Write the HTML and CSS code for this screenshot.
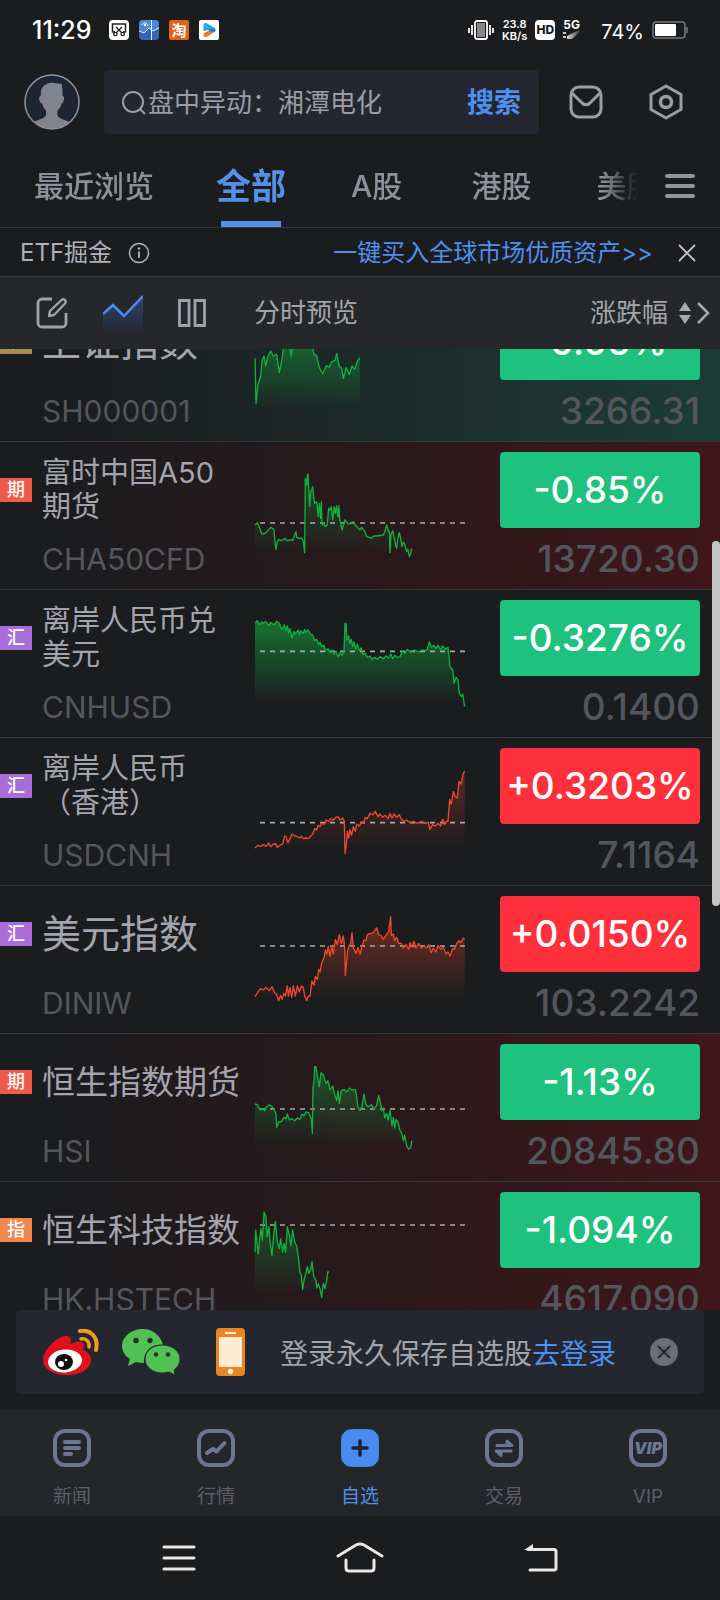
FILE: index.html
```html
<!DOCTYPE html>
<html lang="zh-CN">
<head>
<meta charset="utf-8">
<meta name="viewport" content="width=device-width, initial-scale=1">
<title>自选</title>
<link rel="stylesheet" href="styles.css">
</head>
<body>
<div class="app">
  <div class="status">
    <span class="status-time">11:29</span>
    <div class="status-apps">
      <svg class="app-icon" viewBox="0 0 20 20"><rect width="20" height="20" rx="4" fill="#fff"/><path d="M6 12H3.500V4h13v8H14" fill="none" stroke="#222" stroke-width="1.500"/><path d="M7 7l6 6M13 7l-6 6" stroke="#222" stroke-width="1.300"/><circle cx="6.300" cy="14" r="1.700" fill="none" stroke="#222" stroke-width="1.300"/><circle cx="13.700" cy="14" r="1.700" fill="none" stroke="#222" stroke-width="1.300"/></svg>
      <svg class="app-icon" viewBox="0 0 20 20"><rect width="20" height="20" rx="4" fill="#3465b5"/><path d="M0 4a4 4 0 0 1 4-4h12a4 4 0 0 1 4 4v4l-6 3-4-3-5 5-5-3z" fill="#4c86d8"/><path d="M0 11l5 2 5-5 4 3 6-3M12.500 0v20M3 5c1-3 5-3 6 1" fill="none" stroke="#e8f0fc" stroke-width="1"/><circle cx="6" cy="5" r="1.200" fill="#fff"/></svg>
      <svg class="app-icon" viewBox="0 0 20 20"><rect width="20" height="20" rx="2" fill="#e0601c"/><text class="tao" x="10" y="15.500" text-anchor="middle">淘</text></svg>
      <svg class="app-icon" viewBox="0 0 20 20"><rect width="20" height="20" rx="2" fill="#fff"/><path d="M4.500 5c0-2 2-2.600 3.600-1.600L15 7.500c2 1.300 2.200 3.200.5 4.500L4.500 5z" fill="#18a8f0"/><path d="M4.500 5L11 9.500 4.500 11z" fill="#18a8f0"/><path d="M15.500 12L8.500 16.500c-2 1.200-4 .5-4-1.500 0-1 .5-2 1.500-2.500l5.500-2.500z" fill="#f07c20"/><path d="M9 8.500l7.500 1.200-1 2.300-5-.5z" fill="#2072d8"/></svg>
    </div>
    <div class="status-right">
      <svg class="vibrate" viewBox="0 0 26 20"><rect x="7" y="1" width="12" height="18" rx="2" fill="none" stroke="#fff" stroke-width="1.800"/><rect x="9" y="3" width="8" height="14" fill="#85878a"/><path d="M4 5v10M1 8v5M22 5v10M25 8v5" stroke="#fff" stroke-width="1.800"/></svg>
      <span class="speed"><span>23.8</span><span>KB/s</span></span>
      <span class="hd">HD</span>
      <span class="net">5G<svg class="signal" viewBox="0 0 18 10"><defs><linearGradient id="sig" x1="0" x2="1"><stop offset="0" stop-color="#ddd"/><stop offset="1" stop-color="#333"/></linearGradient></defs><path d="M0 3h3M0 7h3" stroke="#ccc" stroke-width="2"/><path d="M4 9V6L16 0l1 2L9 9z" fill="url(#sig)"/></svg></span>
      <span class="percent">74%</span>
      <svg class="battery" viewBox="0 0 36 18"><rect x="1" y="1" width="32" height="16" rx="3" fill="none" stroke="#77797c" stroke-width="1.500"/><rect x="3" y="3" width="21" height="12" rx="1" fill="#fff"/><path d="M35 6v6" stroke="#77797c" stroke-width="1.500"/></svg>
    </div>
  </div>

  <header class="top">
    <button class="icon-btn" aria-label="我的">
      <svg class="avatar" viewBox="0 0 56 56"><defs><clipPath id="face"><circle cx="28" cy="28" r="27"/></clipPath></defs><circle cx="28" cy="28" r="27" fill="#1e2532"/><path clip-path="url(#face)" fill="#81838f" d="M17 17c1-6 8-9 13-8 3 .5 6 .5 8 1-.5 2 .5 4 .5 7v5c2 0 2 3 1 5-.5 1.500-1 2.500-2 2.500-.5 3-2 5-4 7v5c2 4 11 5 17 9v8H4v-8c6-4 16-5 18-9v-5c-2-2-3-4-4-7-1 0-2-1-2.300-2.500-1-2-1-4.500 1-5z"/><circle cx="28" cy="28" r="27" fill="none" stroke="#90929b" stroke-width="1.500"/></svg>
    </button>
    <form class="search">
      <svg class="lens" viewBox="0 0 26 26"><circle cx="12" cy="12" r="10" fill="none" stroke="#9a9ca6" stroke-width="2"/><path d="M19 19l5 5" stroke="#9a9ca6" stroke-width="2"/></svg>
      <input class="search-input" type="text" aria-label="搜索股票" placeholder="盘中异动：湘潭电化">
      <button class="search-btn" type="button">搜索</button>
    </form>
    <button class="icon-btn" aria-label="消息"><svg class="icon-34" viewBox="0 0 34 34"><rect x="2" y="2" width="30" height="30" rx="8" fill="none" stroke="#9b9ca4" stroke-width="3"/><path d="M3 8l10 10q4 3.500 8 0L31 8" fill="none" stroke="#9b9ca4" stroke-width="3"/></svg></button>
    <button class="icon-btn" aria-label="设置"><svg class="icon-34" viewBox="0 0 34 36"><path d="M17 2l15 8.500v15L17 34 2 25.500v-15z" fill="none" stroke="#9b9ca4" stroke-width="3" stroke-linejoin="round"/><circle cx="17" cy="18" r="5.500" fill="none" stroke="#9b9ca4" stroke-width="3.500"/></svg></button>
  </header>

  <nav class="tabs">
    <div class="tab-list">
      <a class="tab" href="#recent">最近浏览</a>
      <a class="tab tab-on" href="#all">全部</a>
      <a class="tab" href="#a">A股</a>
      <a class="tab" href="#hk">港股</a>
      <a class="tab" href="#us">美股</a>
    </div>
    <button class="icon-btn" aria-label="全部分组"><svg class="burger" viewBox="0 0 30 24"><path d="M2 2h26M2 12h26M2 22h26" stroke="#93949c" stroke-width="4" stroke-linecap="round"/></svg></button>
  </nav>

  <div class="promo">
    <span>ETF掘金</span>
    <svg class="info" viewBox="0 0 22 22"><circle cx="11" cy="11" r="9.500" fill="none" stroke="#b4b5ba" stroke-width="1.500"/><path d="M11 9.500V16" stroke="#b4b5ba" stroke-width="1.800"/><circle cx="11" cy="6.500" r="1.200" fill="#b4b5ba"/></svg>
    <a class="promo-link" href="#etf">一键买入全球市场优质资产&gt;&gt;</a>
    <button class="icon-btn" aria-label="关闭"><svg class="close" viewBox="0 0 18 18"><path d="M1 1l16 16M17 1L1 17" stroke="#c2c2c4" stroke-width="1.800"/></svg></button>
  </div>

  <div class="tools">
    <div class="tool-icons">
      <button class="icon-btn" aria-label="编辑"><svg class="icon-32" viewBox="0 0 32 32"><path d="M16 2H6a4 4 0 0 0-4 4v20a4 4 0 0 0 4 4h20a4 4 0 0 0 4-4V16" fill="none" stroke="#a0a1a9" stroke-width="2.800"/><path d="M13 19l1-5L25.500 3q2-1.500 3.500 0t0 3.500L18 18z" fill="none" stroke="#a0a1a9" stroke-width="2.400" stroke-linejoin="round"/></svg></button>
      <button class="icon-btn" aria-label="分时"><svg class="trend" viewBox="0 0 40 38"><defs><linearGradient id="tg" x1="0" y1="0" x2="0" y2="1"><stop offset="0" stop-color="#3568b4" stop-opacity=".6"/><stop offset="1" stop-color="#20355c" stop-opacity=".2"/></linearGradient></defs><path d="M0 20L10 11l11 11L40 1v37H0z" fill="url(#tg)"/><path d="M0 20L10 11l11 11L40 2" fill="none" stroke="#4a8df0" stroke-width="2.500"/></svg></button>
      <button class="icon-btn" aria-label="双列"><svg class="cols" viewBox="0 0 28 28"><path d="M1.500 1.500h9.500v25H1.500zM17 1.500h9.500v25H17z" fill="none" stroke="#a0a1a9" stroke-width="2.800"/></svg></button>
    </div>
    <span class="tool-title">分时预览</span>
    <button class="sort">涨跌幅<svg class="sort-icon" viewBox="0 0 32 24"><path d="M7 1l6 9H1zM7 23l6-9H1z" fill="#a8a9af"/><path d="M20 2l10 10-10 10" fill="none" stroke="#a8a9af" stroke-width="2.500"/></svg></button>
  </div>

  <main class="quotes">
    <ul class="rows">
      <li class="row row-green">
        <span class="tag tag-gold">沪</span><span class="name name-l">上证指数</span>
        <svg class="chart" data-chart="sh" viewBox="762 0 636 444"></svg>
        <span class="pill down">-0.06%</span><span class="code">SH000001</span><span class="price">3266.31</span>
      </li>
      <li class="row row-red">
        <span class="tag tag-red">期</span><span class="name name-s">富时中国A50期货</span>
        <svg class="chart" data-chart="a50" viewBox="762 0 636 444"></svg>
        <span class="pill down">-0.85%</span><span class="code">CHA50CFD</span><span class="price">13720.30</span>
      </li>
      <li class="row">
        <span class="tag tag-purple">汇</span><span class="name name-s">离岸人民币兑美元</span>
        <svg class="chart" data-chart="cnhusd" viewBox="762 0 636 444"></svg>
        <span class="pill down">-0.3276%</span><span class="code">CNHUSD</span><span class="price">0.1400</span>
      </li>
      <li class="row">
        <span class="tag tag-purple">汇</span><span class="name name-s">离岸人民币（香港）</span>
        <svg class="chart" data-chart="usdcnh" viewBox="762 0 636 444"></svg>
        <span class="pill up">+0.3203%</span><span class="code">USDCNH</span><span class="price">7.1164</span>
      </li>
      <li class="row">
        <span class="tag tag-purple">汇</span><span class="name name-l">美元指数</span>
        <svg class="chart" data-chart="diniw" viewBox="762 0 636 444"></svg>
        <span class="pill up">+0.0150%</span><span class="code">DINIW</span><span class="price">103.2242</span>
      </li>
      <li class="row row-red">
        <span class="tag tag-red">期</span><span class="name name-m">恒生指数期货</span>
        <svg class="chart" data-chart="hsi" viewBox="762 0 636 444"></svg>
        <span class="pill down">-1.13%</span><span class="code">HSI</span><span class="price">20845.80</span>
      </li>
      <li class="row row-red">
        <span class="tag tag-orange">指</span><span class="name name-m">恒生科技指数</span>
        <svg class="chart" data-chart="hstech" viewBox="762 0 636 444"></svg>
        <span class="pill down">-1.094%</span><span class="code">HK.HSTECH</span><span class="price">4617.090</span>
      </li>
    </ul>
    <div class="scrollbar"></div>
  </main>

  <section class="login">
    <div class="login-icons">
      <svg class="weibo" viewBox="0 0 56 46"><path d="M0 31C0 22 12 9 22 7q8-1 5 8 12-5 14 0 1 3-1 6 8 3 8 10c0 9-11 15-24 15S0 40 0 31z" fill="#e2101a"/><ellipse cx="22" cy="32" rx="17" ry="11.500" fill="#fff" transform="rotate(-6 22 32)"/><ellipse cx="21" cy="33" rx="9" ry="8" fill="#111"/><circle cx="18" cy="35" r="3" fill="#fff"/><circle cx="23" cy="31" r="1.300" fill="#fff"/><path d="M37 2c10-2 19 6 16 19" fill="none" stroke="#f29b1c" stroke-width="4" stroke-linecap="round"/><path d="M38 10c5-1 9 3 8 8" fill="none" stroke="#f29b1c" stroke-width="3.500" stroke-linecap="round"/></svg>
      <svg class="wechat" viewBox="0 0 58 46"><path d="M21 0C9 0 0 8 0 17c0 5 3 10 8 13l-2 7 8-4q4 1 8 1a16 16 0 0 1 19-18C39 7 31 0 21 0z" fill="#50c152"/><path d="M40 16c-9 0-17 6-17 14s8 14 17 14q4 0 7-1l6 3-1-5c4-3 6-7 6-11 0-8-8-14-18-14z" fill="#50c152" stroke="#25302e" stroke-width="1"/><g fill="#25302e"><circle cx="14" cy="11.500" r="2.700"/><circle cx="28" cy="11.500" r="2.700"/><circle cx="34" cy="25.500" r="2.200"/><circle cx="46" cy="25.500" r="2.200"/></g></svg>
      <svg class="phone" viewBox="0 0 29 48"><rect width="29" height="48" rx="4" fill="#ea8526"/><rect x="3" y="9" width="23" height="30" fill="#fdebd2"/><path d="M9 5h11" stroke="#fdebd2" stroke-width="2"/><circle cx="14.500" cy="43.500" r="2.700" fill="#fdebd2"/></svg>
    </div>
    <p class="login-text">登录永久保存自选股<a class="login-link" href="#login">去登录</a></p>
    <button class="icon-btn" aria-label="关闭提示"><svg class="dismiss" viewBox="0 0 28 28"><circle cx="14" cy="14" r="14" fill="#6b6d78"/><path d="M8 8l12 12M20 8L8 20" stroke="#24272f" stroke-width="1.800"/></svg></button>
  </section>

  <nav class="bottom">
    <a class="item" href="#news"><svg class="item-icon" viewBox="0 0 38 38"><rect x="2" y="2" width="34" height="34" rx="10" fill="none" stroke="#6a7894" stroke-width="4"/><path d="M12 13h14M12 19h14M12 25h6" stroke="#6a7894" stroke-width="4" stroke-linecap="round"/></svg>新闻</a>
    <a class="item" href="#market"><svg class="item-icon" viewBox="0 0 38 38"><rect x="2" y="2" width="34" height="34" rx="10" fill="none" stroke="#6a7894" stroke-width="4"/><path d="M10 24l6-4 3.500 2.500L27.500 14" fill="none" stroke="#6a7894" stroke-width="4" stroke-linecap="round" stroke-linejoin="round"/></svg>行情</a>
    <a class="item item-on" href="#watch"><svg class="item-icon" viewBox="0 0 38 38"><rect width="38" height="38" rx="11" fill="#4a8af0"/><path d="M12 19h14M19 12v14" stroke="#1e2430" stroke-width="3.500" stroke-linecap="round"/></svg>自选</a>
    <a class="item" href="#trade"><svg class="item-icon" viewBox="0 0 38 38"><rect x="2" y="2" width="34" height="34" rx="10" fill="none" stroke="#6a7894" stroke-width="4"/><path d="M12 16.500h15l-5-4.500v4M26 22H11l5 4.500v-4" fill="#6a7894" stroke="#6a7894" stroke-width="3" stroke-linecap="round" stroke-linejoin="round"/></svg>交易</a>
    <a class="item" href="#vip"><svg class="item-icon" viewBox="0 0 38 38"><rect x="2" y="2" width="34" height="34" rx="10" fill="none" stroke="#6a7894" stroke-width="4"/><text class="vip" x="19" y="25" text-anchor="middle">VIP</text></svg>VIP</a>
  </nav>

  <div class="system">
    <button class="icon-btn sys-key" aria-label="最近任务"><svg class="sys-menu" viewBox="0 0 34 28"><path d="M2 3h30M2 14h30M2 25h30" stroke="#e8e8e8" stroke-width="3" stroke-linecap="round"/></svg></button>
    <button class="icon-btn sys-key" aria-label="主屏幕"><svg class="sys-home" viewBox="0 0 48 32"><path d="M2 14L20 3q4-2 8 0l18 11M10 18v8q0 3 3 3h22q3 0 3-3v-8" fill="none" stroke="#e8e8e8" stroke-width="3" stroke-linecap="round"/></svg></button>
    <button class="icon-btn sys-key" aria-label="返回"><svg class="sys-back" viewBox="0 0 34 28"><path d="M4 5.500h26q2 0 2 2V24q0 2-2 2H6" fill="none" stroke="#e8e8e8" stroke-width="3" stroke-linecap="round"/><path d="M0 6l9-6v6z" fill="#e8e8e8"/></svg></button>
  </div>
</div>
<script src="charts.js"></script>
</body>
</html>
```
FILE: styles.css
```css
* { box-sizing: border-box; }

body {
  margin: 0;
  background: #1b1c1e;
  color: #a3a4ab;
  font-family: Inter, "Noto Sans CJK SC", sans-serif;
}

.app { height: 100vh; display: flex; flex-direction: column; overflow: hidden; }
.app > * { flex: none; }
.app svg { display: block; flex: none; }
a { color: inherit; text-decoration: none; }
button { font: inherit; color: inherit; background: none; border: 0; padding: 0; }
.icon-btn { display: flex; flex: none; }

/* status bar */
.status { display: flex; align-items: center; height: 60px; padding: 0 32px; color: #fff; }
.status-time { font-size: 25px; font-weight: 500; line-height: 32px; }
.status-apps { display: flex; gap: 10px; margin-left: 17px; }
.app-icon { width: 20px; height: 20px; }
.tao { font-size: 15px; font-weight: 700; fill: #fff; }
.status-right { display: flex; align-items: center; gap: 8px; margin-left: auto; }
.vibrate { width: 26px; height: 20px; }
.speed { display: flex; flex-direction: column; align-items: center; font-size: 11px; font-weight: 600; line-height: 12px; }
.hd { width: 20px; height: 20px; border-radius: 4px; background: #fff; color: #1b1c1e; font-size: 12px; font-weight: 800; line-height: 20px; text-align: center; }
.net { display: flex; flex-direction: column; margin-right: 12px; font-size: 12px; font-weight: 700; line-height: 10px; }
.signal { width: 18px; height: 10px; }
.percent { padding-top: 3px; font-size: 20px; line-height: 30px; }
.battery { width: 36px; height: 18px; }

/* search */
.top { display: flex; align-items: center; height: 84px; padding: 0 37px 0 24px; }
.avatar { width: 56px; height: 56px; }
.search { flex: 1; min-width: 0; display: flex; align-items: center; height: 64px; margin: 0 30px 0 24px; padding: 2px 18px 0 17px; border-radius: 4px; background: #242730; }
.lens { width: 26px; height: 26px; }
.search-input { flex: 1; min-width: 0; padding: 0 0 0 1px; border: 0; outline: 0; background: none; color: #9a9ca6; font: 26px/36px Inter, "Noto Sans CJK SC", sans-serif; }
.search-input::placeholder { color: #9a9ca6; opacity: 1; }
.search-btn { color: #4f8fee; font-size: 27px; font-weight: 700; line-height: 36px; }
.icon-34 { width: 34px; height: 36px; }
.top .icon-btn + .icon-btn { margin-left: 46px; }

/* group tabs */
.tabs { display: flex; align-items: center; height: 84px; padding-right: 25px; border-bottom: 1px solid #37383b; }
.tab-list { flex: 1; min-width: 0; display: flex; align-self: stretch; padding-left: 4px; margin-right: 27px; overflow: hidden; -webkit-mask-image: linear-gradient(to right, #000 calc(100% - 36px), transparent); mask-image: linear-gradient(to right, #000 calc(100% - 36px), transparent); }
.tab { flex: none; display: flex; align-items: center; justify-content: center; min-width: 125px; padding: 0 32px 4px; color: #8f9099; font-size: 30px; font-weight: 500; }
.tab:first-child { padding: 0 34px 4px 30px; }
.tab-on { position: relative; padding: 0 28px 4px; color: #568fe8; font-size: 35px; font-weight: 700; }
.tab-on::after { content: ""; position: absolute; left: calc(50% - 30px); bottom: 0; width: 60px; height: 6px; background: #568fe8; }
.burger { width: 30px; height: 24px; }

/* promo line */
.promo { display: flex; align-items: center; height: 49px; padding: 2px 24px 0 20px; border-bottom: 1px solid #37383b; color: #b0b1b6; font-size: 24px; line-height: 36px; }
.info { width: 22px; height: 22px; margin-left: 16px; }
.promo-link { margin: 0 25px 0 auto; color: #4f8fee; }
.close { width: 18px; height: 18px; }

/* toolbar */
.tools { display: flex; align-items: center; height: 72px; padding: 0 10px 0 36px; background: #25272a; font-size: 26px; line-height: 36px; }
.tool-icons { display: flex; align-items: center; gap: 35px; width: 218px; }
.icon-32 { width: 32px; height: 32px; }
.trend { width: 40px; height: 38px; }
.cols { width: 28px; height: 28px; }
.sort { display: flex; align-items: center; gap: 10px; margin-left: auto; }
.sort-icon { width: 32px; height: 24px; }

/* quote list, shown scrolled part of the way down */
.quotes { position: relative; overflow: hidden; }
.app > .quotes { flex: 1 1 0; min-height: 0; }
.rows { margin: -55px 0 0; padding: 0; list-style: none; }
.row {
  display: grid;
  grid-template-columns: 32px minmax(0, 1fr) 246px 200px;
  grid-template-rows: 76px 61px;
  grid-template-areas: "tag name chart pill" ". code chart price";
  align-items: center;
  padding: 10px 20px 0 0;
  border-bottom: 1px solid #343639;
}
.row-red { background: linear-gradient(to right, #1b1c1e 8%, #27191c 45%, #3f161b); }
.row-green { background: linear-gradient(to right, #1b1c1e 8%, #1c2827 45%, #1c3d34); }
.tag { grid-area: tag; height: 24px; padding-left: 7px; color: #fff; font-size: 18px; font-weight: 500; line-height: 24px; }
.tag-red { background: #ef5a4b; }
.tag-purple { background: #a96dda; }
.tag-orange { background: #f0874c; }
.tag-gold { background: #a88d48; }
.name { grid-area: name; padding-left: 10px; color: #a3a4ad; white-space: nowrap; }
.name-l { font-size: 39px; line-height: 48px; }
.name-m { font-size: 33px; line-height: 42px; }
.name-s { max-width: 205px; font-size: 29px; line-height: 34px; white-space: normal; }
.code { grid-area: code; padding-left: 10px; color: #54565d; font-size: 30px; line-height: 36px; }
.chart { grid-area: chart; align-self: start; width: 212px; height: 148px; margin: -10px 0 -1px; }
.line { fill: none; stroke-width: 4; stroke-linejoin: round; }
.base { stroke: #a9a9ab; stroke-width: 5; stroke-dasharray: 15 15; }
.pill { grid-area: pill; align-self: stretch; border-radius: 4px; color: #fff; font-size: 37px; font-weight: 500; line-height: 76px; text-align: center; }
.down { background: #1ec17d; }
.up { background: #fd303b; }
.price { grid-area: price; color: #54565d; font-size: 37px; font-weight: 500; line-height: 44px; text-align: right; }
.scrollbar { position: absolute; right: 0; top: 20%; width: 8px; height: 38%; border-radius: 4px; background: #c4c4c4; }

/* login strip */
.login { display: flex; align-items: center; height: 84px; margin: 0 16px 16px; padding: 0 26px 0 27px; border-radius: 4px; background: #242730; }
.login-icons { display: flex; align-items: center; }
.weibo { width: 56px; height: 46px; }
.wechat { width: 58px; height: 46px; margin: 0 36px 0 23px; }
.phone { width: 29px; height: 48px; }
.login-text { flex: 1; margin: 0 0 0 35px; padding-top: 3px; font-size: 28px; line-height: 40px; white-space: nowrap; }
.login-link { color: #4f8fee; }
.dismiss { width: 28px; height: 28px; }

/* bottom navigation */
.bottom { display: flex; height: 106px; background: #25262a; }
.item { flex: 1; display: flex; flex-direction: column; align-items: center; gap: 16px; padding-top: 19px; color: #5c5e66; font-size: 19px; line-height: 28px; }
.item-on { color: #4f8fee; }
.item-icon { width: 38px; height: 38px; }
.vip { font-size: 16px; font-weight: 900; font-style: italic; fill: #6a7894; }

/* system keys */
.system { display: flex; align-items: center; height: 84px; padding: 0 88px; }
.sys-key { flex: 1; justify-content: center; }
.sys-menu { width: 34px; height: 28px; }
.sys-home { width: 48px; height: 32px; }
.sys-back { width: 34px; height: 28px; }
```
FILE: charts.js
```js
const GREEN = "#12b03e";
const RED = "#f0482c";
const FLOOR = 340;

const charts = {
  sh: { color: GREEN, fill: 0.6, pts: "765,193 768,328 774,271 782,246 786,201 792,186 797,216 803,189 812,171 820,186 830,181 838,236 846,196 850,160 870,150 873,186 880,150 935,150 942,179 950,186 958,221 968,239 978,216 988,219 995,203 1005,199 1010,179 1018,216 1025,223 1030,254 1038,221 1048,241 1056,216 1064,226 1072,201 1080,191" },
  a50: { color: GREEN, fill: 0.35, base: 243, pts: "765,249 772,242 780,260 785,276 795,274 800,269 812,256 822,262 824,294 828,322 832,300 836,292 842,296 848,294 855,289 862,297 870,293 878,296 884,278 888,269 890,286 900,290 905,288 910,298 914,332 916,109 920,129 922,100 924,96 929,194 932,150 934,144 938,134 941,165 944,184 950,179 953,205 955,224 958,184 960,200 962,229 964,180 966,249 970,243 975,254 982,249 986,199 990,205 994,194 998,234 1003,194 1006,215 1010,191 1014,224 1017,191 1019,229 1026,264 1034,234 1040,240 1045,246 1060,239 1066,250 1072,256 1080,264 1085,256 1095,269 1100,284 1108,286 1115,289 1122,282 1130,282 1150,279 1156,265 1160,249 1166,269 1168,269 1170,332 1173,280 1178,266 1184,294 1187,310 1190,319 1194,285 1198,272 1202,290 1206,314 1210,300 1214,306 1220,329 1224,322 1228,344 1232,335 1235,319" },
  cnhusd: { color: GREEN, fill: 0.6, base: 184, pts: "765,98 772,92 778,104 786,96 790,100 798,94 806,106 812,98 822,104 830,94 838,100 844,118 850,112 853,104 858,122 862,108 866,128 870,116 876,144 882,124 886,132 894,120 898,134 902,122 910,130 914,118 918,128 924,120 932,132 938,136 944,152 950,148 956,164 960,156 966,170 972,166 976,182 984,176 990,188 996,180 1002,192 1008,184 1014,200 1020,188 1026,196 1032,184 1035,100 1038,100 1041,150 1046,138 1049,160 1054,148 1058,170 1062,156 1067,178 1072,162 1078,182 1084,174 1088,194 1096,190 1102,202 1110,198 1116,208 1124,202 1132,208 1140,200 1150,206 1158,198 1166,204 1172,192 1178,206 1184,196 1192,202 1200,200 1208,182 1214,190 1222,178 1232,186 1244,180 1256,186 1266,180 1274,182 1282,178 1288,156 1294,172 1302,166 1308,176 1314,166 1322,180 1328,168 1336,178 1344,172 1346,190 1350,230 1358,240 1362,280 1368,262 1374,270 1378,310 1384,320 1388,312 1394,350" },
  usdcnh: { color: RED, fill: 0.3, base: 254, pts: "765,330 774,322 782,325 790,320 798,325 806,315 812,326 818,320 826,316 832,328 840,322 848,318 854,294 858,296 864,314 870,302 876,288 884,294 892,296 900,300 904,294 910,302 918,300 926,302 932,294 938,288 944,272 950,276 954,262 960,266 966,256 974,258 978,246 986,250 992,242 1000,246 1008,238 1014,236 1020,246 1028,240 1033,250 1035,346 1039,320 1042,280 1046,300 1050,275 1055,292 1060,266 1066,280 1070,258 1078,264 1084,252 1090,256 1096,238 1102,242 1110,226 1118,230 1126,220 1134,236 1140,228 1148,238 1156,232 1164,242 1170,226 1176,240 1182,228 1190,238 1198,230 1204,244 1212,250 1220,246 1230,254 1240,250 1252,256 1264,250 1276,256 1284,252 1290,274 1298,260 1306,264 1314,256 1322,264 1328,244 1334,260 1340,250 1344,250 1349,184 1354,198 1360,160 1366,176 1372,180 1377,130 1384,138 1388,112 1394,98" },
  diniw: { color: RED, fill: 0.42, base: 180, pts: "765,332 774,318 782,308 790,312 798,304 808,314 816,302 824,320 830,326 836,344 842,328 846,340 852,322 856,330 862,300 865,330 870,304 875,334 880,300 886,330 892,300 898,318 904,300 910,304 914,330 920,344 924,332 930,330 936,284 942,298 946,272 952,280 956,250 960,258 966,228 972,216 976,192 980,204 985,182 990,212 995,180 1000,204 1006,160 1012,176 1018,146 1024,172 1030,150 1034,182 1036,268 1042,200 1046,182 1052,172 1056,140 1060,186 1068,202 1074,184 1080,206 1086,180 1092,162 1098,164 1102,146 1110,142 1118,142 1124,134 1130,126 1136,146 1144,150 1150,160 1158,148 1166,136 1172,92 1174,148 1180,144 1184,164 1190,154 1196,172 1204,172 1210,186 1218,176 1226,190 1230,170 1236,184 1242,166 1248,186 1256,172 1264,186 1272,180 1280,186 1286,176 1294,200 1300,186 1308,198 1314,178 1322,190 1330,184 1338,204 1344,198 1350,210 1358,188 1364,190 1370,172 1376,164 1382,170 1390,156 1394,160" },
  hsi: { color: GREEN, fill: 0.42, base: 225, pts: "765,210 772,212 780,228 788,224 794,230 800,218 808,212 816,218 822,226 828,240 830,280 836,264 844,262 852,250 858,254 862,240 868,258 876,254 884,260 892,252 900,256 906,240 912,246 918,234 926,236 934,256 937,298 939,160 942,140 944,98 948,98 953,130 958,158 963,116 970,122 978,148 984,140 990,168 998,156 1003,178 1010,200 1014,170 1018,208 1024,170 1032,166 1040,174 1048,162 1056,168 1066,166 1070,190 1074,220 1080,230 1086,218 1092,180 1098,212 1106,218 1114,212 1122,226 1130,214 1136,184 1142,210 1146,230 1150,222 1154,252 1160,238 1164,258 1170,230 1176,276 1180,250 1184,282 1188,256 1194,264 1200,290 1206,300 1210,320 1214,304 1220,336 1226,346 1232,340 1236,320" },
  hstech: { color: GREEN, fill: 0.4, base: 129, pts: "765,210 767,144 775,216 780,160 783,140 787,174 792,90 798,106 801,164 807,134 810,180 816,220 822,148 826,118 832,180 838,200 842,170 848,210 852,184 857,210 862,134 868,158 873,192 878,144 884,180 890,192 896,232 899,268 904,280 908,322 913,290 917,276 922,254 926,274 932,262 936,238 941,282 948,296 950,318 955,306 960,320 965,346 970,304 975,320 980,294 983,270 987,270" }
};

const NS = "http://www.w3.org/2000/svg";

function add(parent, name, attrs) {
  const el = document.createElementNS(NS, name);
  for (const key in attrs) el.setAttribute(key, attrs[key]);
  parent.appendChild(el);
  return el;
}

document.querySelectorAll("[data-chart]").forEach((svg) => {
  const key = svg.dataset.chart;
  const { color, fill, base, pts } = charts[key];
  const lastX = pts.split(" ").pop().split(",")[0];
  const grad = add(svg, "linearGradient", { id: "fill-" + key, gradientUnits: "userSpaceOnUse", x1: 0, x2: 0, y1: 90, y2: FLOOR });
  add(grad, "stop", { offset: 0, "stop-color": color, "stop-opacity": fill });
  add(grad, "stop", { offset: 1, "stop-color": color, "stop-opacity": 0 });
  add(svg, "polygon", { points: `${pts} ${lastX},${FLOOR} 765,${FLOOR}`, fill: `url(#fill-${key})` });
  if (base) add(svg, "line", { class: "base", x1: 780, x2: 1396, y1: base, y2: base });
  add(svg, "polyline", { class: "line", points: pts, stroke: color });
});
```
